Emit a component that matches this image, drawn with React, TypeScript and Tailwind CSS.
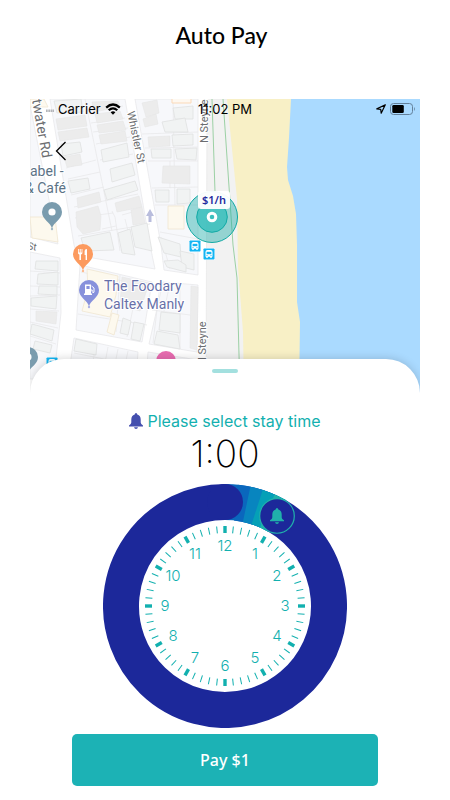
import { useState } from "react";

const blocks = [
  "20,0 95,0 120,146 125,170 63,159 47,156 44,146",
  "105,0 168,0 168,176 134,171 131,146",
  "0,6 14,76 28,145 0,138",
  "0,153 30,159 31,214 26,259 14,280 0,280",
  "50,166 122,183 112,243 46,231",
  "133,183 168,186 167,253 119,245",
  "44,239 108,253 106,280 38,280",
  "118,253 168,261 168,280 116,280",
];

const buildings = [
  "24,2 51,0 53,13 27,14",
  "31,45 50,43 52,53 33,57",
  "38,82 58,79 60,90 41,94",
  "71,51 97,44 99,58 73,63",
  "80,70 102,64 105,76 82,83",
  "74,91 105,82 108,91 77,101",
  "101,128 117,124 122,152 105,148",
  "51,139 80,133 84,151 55,152",
  "88,134 100,130 105,156 92,154",
  "143,9 163,7 163,20 145,20",
  "132,23 155,19 158,33 135,33",
  "142,36 163,35 163,46 143,47",
  "121,50 141,50 141,59 122,59",
  "145,50 167,49 166,61 147,60",
  "125,91 139,91 139,103 126,103",
  "147,90 160,90 160,104 147,105",
  "128,138 150,145 151,158 134,154",
  "150,152 164,155 164,171 152,168",
  "134,162 148,161 156,166 156,173 137,168",
  "6,162 28,162 28,172 5,170",
  "8,175 28,173 28,186 7,185",
  "9,187 27,187 27,196 8,195",
  "1,199 27,197 26,210 1,207",
  "2,225 24,231 22,242 0,235",
  "5,242 22,246 20,254 3,250",
  "93,219 101,222 98,236 90,234",
  "104,223 114,225 110,242 101,240",
  "131,213 150,215 150,234 129,231",
  "127,232 148,236 150,250 124,245",
  "46,240 67,245 66,256 44,252",
];

const darkBuildings = [
  "26,20 55,16 57,27 28,31",
  "28,33 57,29 59,38 30,42",
  "34,58 50,55 52,66 37,68",
  "62,3 88,2 90,8 64,13",
  "65,15 90,12 93,20 67,24",
  "67,26 93,22 96,31 69,34",
  "69,36 95,32 97,42 71,45",
  "47,99 69,93 71,103 48,109",
  "46,113 68,107 71,117 70,131 53,135 47,128",
  "85,104 109,97 112,108 87,113",
  "101,111 112,108 115,124 103,126",
  "112,4 127,1 129,14 116,18",
  "113,20 126,15 128,25 115,28",
  "118,38 140,37 140,47 119,48",
  "133,67 160,67 160,85 132,84",
  "6,212 27,213 26,225 6,222",
  "92,178 119,184 110,212 90,206",
  "161,187 168,188 167,251 160,249",
];

const shops = [
  "138,107 154,107 154,130 138,130",
  "57,170 88,177 86,196 80,218 52,212 58,190",
  "82,214 89,216 84,236 77,233",
  "0,118 25,118 28,143 2,139",
  "0,0 14,0 18,8 0,8",
];

const parcelLines =
  "M55 0L82 132M58 12L93 7M61 24L95 19M63 33L98 29M66 45L100 38M70 61L103 55M36 69L66 61M38 80L70 73M41 96L74 88M44 108L108 95M82 112L85 118L90 152M72 130L86 127M45 119L83 114M92 116L110 111M48 137L120 125M95 120L104 155M112 35L168 33M115 49L168 48M118 62L168 62M122 89L168 88M125 106L168 106M143 0L145 106M130 133L168 140M140 62V89M131 138L140 170M0 172L30 174M0 187L30 188M0 197L30 196M0 210L29 212M0 223L28 229M0 237L26 245M51 173L122 188M48 215L117 226M90 176L86 233M109 181L97 238M130 186L123 244M140 184L134 212M150 185V250M122 211L160 216M66 245L60 280M78 248L72 280M88 250L82 280M98 252L92 280M44 254L104 266";

function Pin({ x, y, color, children }: any) {
  return (
    <g transform={`translate(${x} ${y})`}>
      <path d="M0 17C-1 10-10 8-10 0A10 10 0 0 1 10 0C10 8 1 10 0 17Z" fill={color} />
      {children}
      <circle cy="17" r="1.2" fill={color} stroke="#ffffff" strokeOpacity=".4" />
    </g>
  );
}

function BusStop({ x, y }: { x: number; y: number }) {
  return (
    <g transform={`translate(${x} ${y})`}>
      <rect x="-6" y="-6" width="12" height="12" fill="#fff" />
      <rect x="-5.5" y="-5.5" width="11" height="11" rx=".7" fill="#13b5f3" />
      <path d="M-3.5-2Q-3.5-4-1.5-4H1.5Q3.5-4 3.5-2V2.8H2.7V4H1.3V2.8H-1.3V4H-2.7V2.8H-3.5Z" fill="#fff" />
      <path d="M-2.4-2.2H2.4V.2H-2.4Z" fill="#13b5f3" />
      <circle cx="-2" cy="1.5" r=".6" fill="#13b5f3" />
      <circle cx="2" cy="1.5" r=".6" fill="#13b5f3" />
    </g>
  );
}

function StreetMap() {
  return (
    <svg
      viewBox="0 0 390 294"
      preserveAspectRatio="xMidYMin slice"
      className="block h-[294px] w-full font-['Roboto','Inter',sans-serif]"
      role="img"
      aria-label="Map of Manly"
    >
      <rect width="390" height="294" fill="#ffffff" />

      {/* City blocks */}
      {blocks.map((p) => (
        <polygon key={p} points={p} fill="#f7f8fb" stroke="#e9e9eb" strokeWidth=".8" />
      ))}
      <path d={parcelLines} fill="none" stroke="#e6e6e8" strokeWidth=".7" />
      {buildings.map((p) => (
        <polygon key={p} points={p} fill="#f1f3f3" stroke="#e0e1e1" strokeWidth=".8" />
      ))}
      {darkBuildings.map((p) => (
        <polygon key={p} points={p} fill="#ececec" stroke="#e5e5e5" strokeWidth=".6" />
      ))}
      {shops.map((p) => (
        <polygon key={p} points={p} fill="#fdf9ee" stroke="#f0e6d0" strokeWidth=".8" />
      ))}
      <path d="M142 0V4H161V0" fill="#fef8f0" stroke="#fbd9b8" />

      {/* Promenade, beach and sea */}
      <path d="M177 0H220V294H176Z" fill="#f2f2f2" stroke="#e4e4e4" strokeWidth=".6" />
      <path d="M197 0L207 100L208 169L213 233L214 294H290V0Z" fill="#f8f0c6" />
      <path
        d="M261 0L259 39L257 68L258 81L263 97L266 115L267 146V203L270 223L269 294H390V0Z"
        fill="#aadaff"
      />
      <path d="M193 0L203 146L207 179L210 294M182 0L185 93" fill="none" stroke="#9bd0a4" strokeWidth="1" />
      <path d="M120 110L124 117H121.5V123H118.5V117H116Z" fill="#b9bddd" />

      {/* Street names */}
      <g fill="#6b6d70" fontSize="11" stroke="#fff" strokeWidth="2" paintOrder="stroke">
        <text transform="translate(2 1) rotate(80)" fontSize="14">twater Rd</text>
        <text transform="translate(97 13) rotate(78)">Whistler St</text>
        <text transform="translate(178 44) rotate(-90)">N Steyne</text>
        <text transform="translate(176 266) rotate(-90)">N Steyne</text>
        <text transform="translate(-3 150) rotate(10)" fontSize="10">St</text>
      </g>

      {/* Places */}
      <g fill="#5b7286" fontSize="14" stroke="#fff" strokeWidth="2" paintOrder="stroke">
        <text x="0" y="77">abel -</text>
        <text x="-5" y="94">&amp; Café</text>
      </g>
      <g fill="#6770a8" fontSize="14" stroke="#fff" strokeWidth="2" paintOrder="stroke">
        <text x="74" y="192">The Foodary</text>
        <text x="74" y="210">Caltex Manly</text>
      </g>

      <BusStop x={165} y={147} />
      <BusStop x={179} y={155} />
      <BusStop x={22} y={264} />
      <Pin x={22} y={113} color="#7a9cae">
        <circle r="3.6" fill="#fff" />
      </Pin>
      <Pin x={53} y={155} color="#fc9a5e">
        <path d="M-5-5V-1Q-5 0-3.6.6V6H-2V.6Q-.6 0-.6-1V-5H-1.4V-1.6H-2.3V-5H-3.3V-1.6H-4.2V-5ZM1.6-3Q1.6-5 4-5V6H2.6V1H1.6Z" fill="#fff" />
      </Pin>
      <Pin x={59} y={191} color="#8791dc">
        <path d="M-4-5.5H2V3.5H3V5H-5V3.5H-4Z" fill="#fff" />
        <path d="M-2.6-4H.6V-1H-2.6Z" fill="#8791dc" />
        <path d="M2.5-4L5-2V2.2Q3.6 3.5 3.2 1.5V0H2" fill="none" stroke="#fff" strokeWidth="1" />
      </Pin>
      <Pin x={-2} y={258} color="#7a9cae">
        <circle r="3.6" fill="#fff" />
      </Pin>
      <Pin x={136} y={262} color="#e86cb0">
        <path d="M-6-2H5V0H-6Z" fill="#fff" />
      </Pin>

      {/* Parking spot */}
      <circle cx="182" cy="118" r="25.5" fill="#12aaa5" fillOpacity=".42" stroke="#12aaa5" />
      <circle cx="182" cy="118" r="15.3" fill="#3dbfbd" fillOpacity=".85" stroke="#12aaa5" />
      <circle cx="182" cy="118" r="3.8" fill="#3dbfbd" stroke="#fff" strokeWidth="3" />
      <rect x="168" y="92" width="32" height="18" rx="3" fill="#fff" fillOpacity=".95" />
      <text
        x="184"
        y="105"
        textAnchor="middle"
        fontSize="11"
        className="fill-[#1f2b9e] font-['Noto_Sans',sans-serif] font-semibold"
      >
        $1/h
      </text>
    </svg>
  );
}

function StatusBar() {
  return (
    <div className="grid h-5 grid-cols-[1fr_auto_1fr] items-center px-[5px] text-[13px] leading-5 text-black">
      <div className="flex items-center gap-1 pl-[11px]">
        <svg width="8" height="10" viewBox="0 0 8 10" fill="#b4b6ba" aria-hidden="true">
          <path d="M0 5.5h1.7v2.5H0zM2.3 5.5H4v2.5H2.3zM4.5 5.5h1.7v2.5H4.5zM6.6 5.5H8v2.5H6.6z" />
        </svg>
        <span>Carrier</span>
        <svg width="16" height="12" viewBox="0 0 16 12" fill="none" stroke="#000" strokeWidth="2.2" aria-hidden="true">
          <path d="M1.2 4.6Q8-1.6 14.8 4.6M3.7 7.3Q8 3.3 12.3 7.3" />
          <path d="M8 11.8L5.6 9.2Q8 7.4 10.4 9.2Z" fill="#000" stroke="none" />
        </svg>
      </div>
      <span>11:02 PM</span>
      <div className="flex items-center justify-end gap-1">
        <svg width="10" height="10" viewBox="0 0 10 10" fill="none" stroke="#000" strokeWidth="1.2" strokeLinejoin="round" aria-hidden="true">
          <path d="M9.3.8L.8 4.9L4.7 5.3L5.2 9.2Z" />
        </svg>
        <svg width="25" height="12" viewBox="0 0 25 12" aria-hidden="true">
          <rect x=".5" y=".5" width="22" height="11" rx="3" fill="none" stroke="#63809a" />
          <rect x="2.3" y="2" width="11.5" height="8" rx="1.3" fill="#000" />
          <path d="M24 4Q25.6 6 24 8Z" fill="#63809a" />
        </svg>
      </div>
    </div>
  );
}

const bellPath =
  "M8 0Q9.2 0 9.3 1.5Q12.7 2.6 12.7 6.6V9.5Q12.7 11.2 15 12.4V13.4H1V12.4Q3.3 11.2 3.3 9.5V6.6Q3.3 2.6 6.7 1.5Q6.8 0 8 0ZM6 14.3H10Q9.6 16 8 16T6 14.3Z";

const RING = 104;

function point(deg: number, r: number) {
  const a = (deg * Math.PI) / 180;
  return [122 + r * Math.sin(a), 122 - r * Math.cos(a)];
}

function arc(from: number, to: number) {
  const [x1, y1] = point(from, RING);
  const [x2, y2] = point(to, RING);
  return `M${x1} ${y1}A${RING} ${RING} 0 ${to - from > 180 ? 1 : 0} 1 ${x2} ${y2}`;
}

const shades = ["#0a67bd", "#0a67bd", "#0885bf", "#05a0b7", "#20b1ab"];

function Dial({ minutes }: { minutes: number }) {
  const angle = minutes / 2;
  const step = angle / shades.length;
  const [hx, hy] = point(angle, RING);

  return (
    <svg viewBox="0 0 244 244" className="mx-auto mt-[10px] block w-[244px]" role="img" aria-label="Stay time dial">
      {/* each shade runs on under the next one, so no seam shows */}
      <g fill="none" strokeWidth="36">
        {shades.map((color, i) => (
          <path key={i} d={arc(i * step, angle)} stroke={color} />
        ))}
        <path d={arc(angle, 359.9)} stroke="#1c289a" />
      </g>
      <circle cx="122" cy="18" r="18" fill="#1c289a" />

      {Array.from({ length: 60 }, (_, i) => (
        <path
          key={i}
          d="M122 42V49"
          stroke="#12b0af"
          strokeWidth={i % 5 === 0 ? 3.4 : 1}
          transform={`rotate(${i * 6} 122 122)`}
        />
      ))}
      {Array.from({ length: 12 }, (_, i) => {
        const [x, y] = point((i + 1) * 30, 60);
        return (
          <text key={i} x={x} y={y + 5} textAnchor="middle" fontSize="15" className="fill-[#12b0af] font-light">
            {i + 1}
          </text>
        );
      })}

      <circle cx={hx} cy={hy} r="17.3" fill="#1c289a" stroke="#20b1ab" strokeWidth="1.2" />
      <path d={bellPath} fill="#20b1ab" transform={`translate(${hx - 8} ${hy - 8})`} />
    </svg>
  );
}

export default function App() {
  const [minutes, setMinutes] = useState(60);
  const time = `${Math.floor(minutes / 60)}:${String(minutes % 60).padStart(2, "0")}`;

  return (
    <main className="min-h-screen bg-white font-['Inter','Liberation_Sans',sans-serif]">
      <h1 className="pt-[21px] pb-[50px] pr-[7px] text-center font-['Lato',sans-serif] text-[23px] leading-7 font-medium text-black">
        Auto Pay
      </h1>

      <section className="mx-[30px] overflow-hidden">
        <div className="relative h-[260px]">
          <StreetMap />
          <div className="absolute inset-x-0 top-0">
            <StatusBar />
            <button type="button" aria-label="Back" className="mt-5 ml-[22px] flex h-6 w-6 items-center pl-[3px]">
              <svg width="12" height="20" viewBox="0 0 12 20" fill="none" stroke="#000" strokeWidth="1.3">
                <path d="M10.5 1L1.5 10L10.5 19" />
              </svg>
            </button>
          </div>
        </div>

        <div className="relative rounded-t-[34px] bg-white pt-[10px] pb-[14px] shadow-[0_-1px_8px_rgba(0,0,0,0.15)]">
          <div className="mx-auto h-1 w-[26px] rounded-full bg-[#a3e0df]" />

          <label
            htmlFor="stay"
            className="mt-[38px] flex h-5 items-center justify-center gap-1 text-[16px] leading-5 text-[#12b0af]"
          >
            <svg width="14" height="16" viewBox="1 0 14 16" fill="#444fae" aria-hidden="true">
              <path d={bellPath} />
            </svg>
            Please select stay time
          </label>
          <input
            id="stay"
            type="range"
            min={15}
            max={600}
            step={15}
            value={minutes}
            onChange={(e) => setMinutes(Number(e.target.value))}
            className="sr-only"
          />
          <output htmlFor="stay" className="mt-[3px] block text-center text-[37px] leading-10 font-extralight text-black">
            {time}
          </output>

          <Dial minutes={minutes} />

          <div className="px-[42px] pt-[6px]">
            <button
              type="button"
              className="h-[52px] w-full rounded-[5px] bg-[#1cb2b5] font-['Noto_Sans',sans-serif] text-[16px] font-medium text-white"
            >
              Pay $1
            </button>
          </div>
        </div>
      </section>
    </main>
  );
}
